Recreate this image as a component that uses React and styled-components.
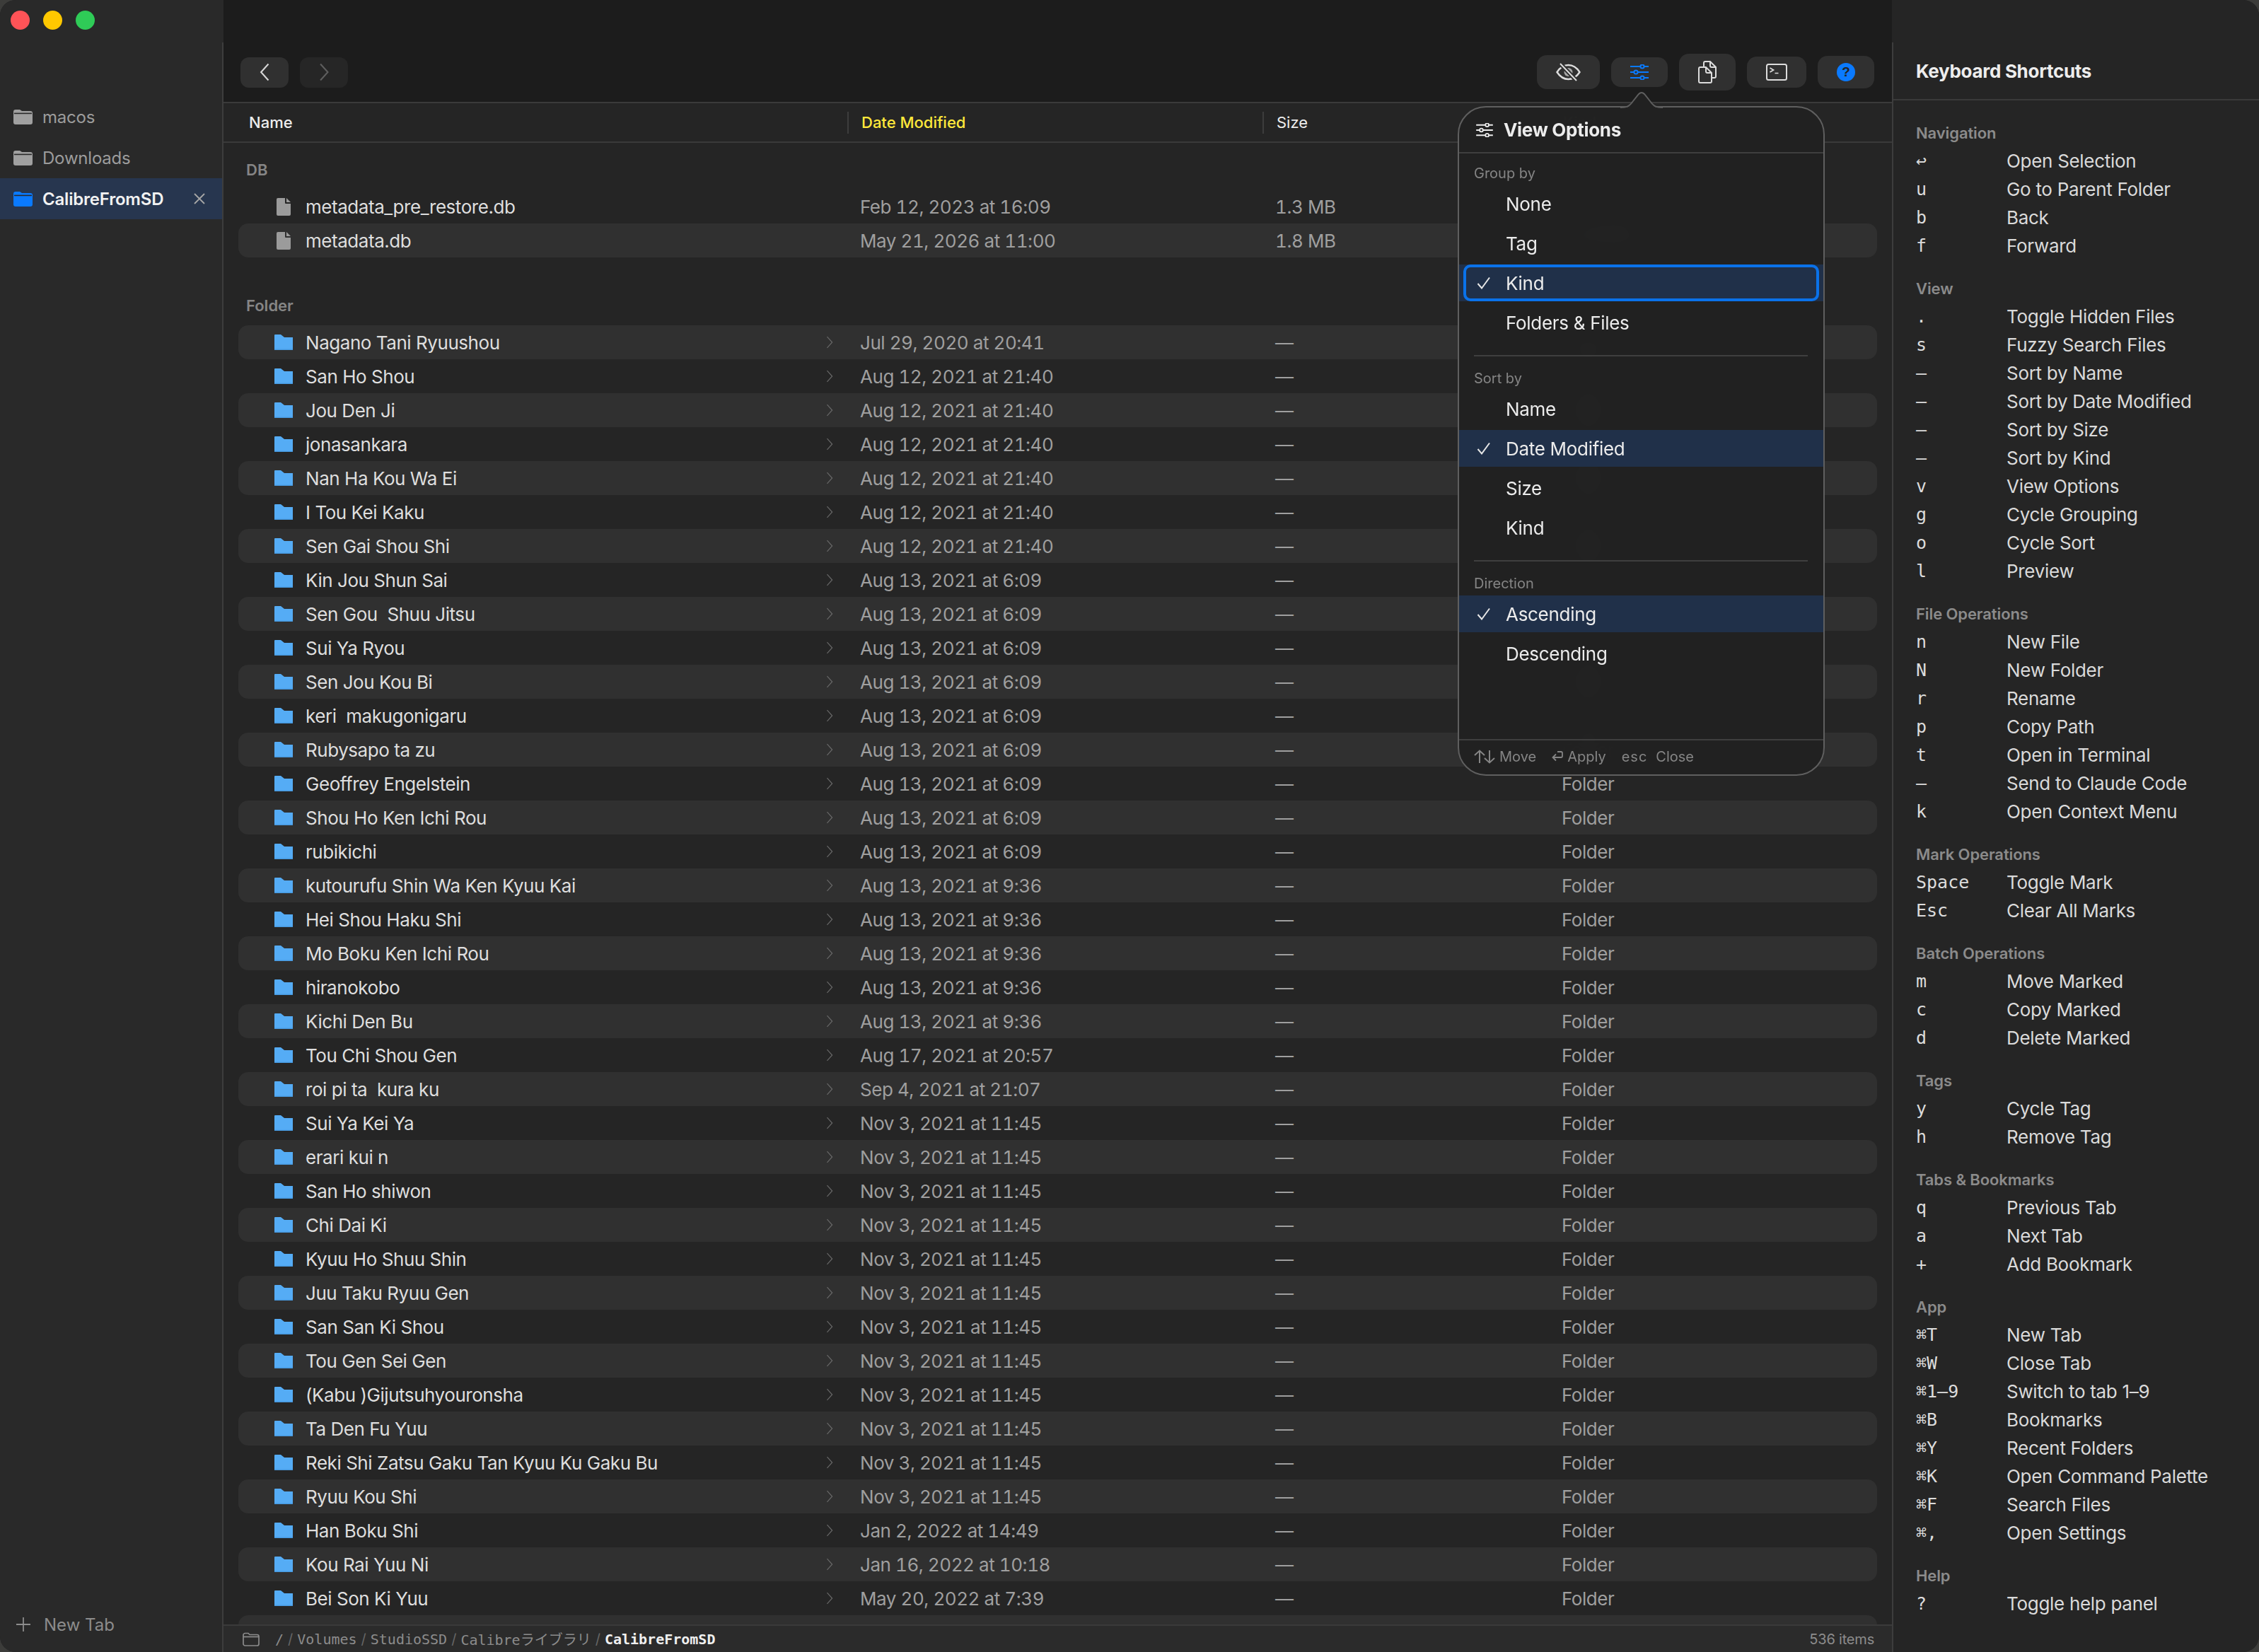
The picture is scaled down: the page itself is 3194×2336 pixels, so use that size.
import React from 'react'
import styled, { createGlobalStyle } from 'styled-components'

const sans = '"Inter", "Noto Sans", sans-serif'
const mono = '"DejaVu Sans Mono", "Noto Sans CJK JP", monospace'

const GlobalStyle = createGlobalStyle`
  html, body {
    margin: 0;
    padding: 0;
    background: #3c3c3a;
  }
  * {
    box-sizing: border-box;
  }
`

const Window = styled.div`
  position: relative;
  display: flex;
  width: 3194px;
  height: 2336px;
  border-radius: 22px;
  overflow: hidden;
  background: #252525;
  font-family: ${sans};
  font-size: 26px;
  color: #dedede;
`

/* Sidebar */
const Sidebar = styled.aside`
  position: relative;
  display: flex;
  flex-direction: column;
  flex: none;
  width: 316px;
  background: #292929;

  &::after {
    content: '';
    position: absolute;
    top: 60px;
    bottom: 0;
    right: 0;
    width: 2px;
    background: #3d3d3d;
  }
`

const Lights = styled.div`
  display: flex;
  align-items: center;
  gap: 19px;
  height: 56px;
  padding-left: 15px;
`

const Light = styled.span`
  width: 27px;
  height: 27px;
  border-radius: 50%;
  background: ${({ $color }) => $color};
`

const TabList = styled.div`
  margin-top: 80px;
`

const Tab = styled.div`
  display: flex;
  align-items: center;
  gap: 14px;
  height: 58px;
  padding: 0 26px 0 19px;
  font-size: 24px;
  font-weight: ${({ $active }) => ($active ? 600 : 400)};
  letter-spacing: -0.2px;
  color: ${({ $active }) => ($active ? '#f2f2f2' : '#9c9c9c')};
  background: ${({ $active }) => ($active ? '#27364f' : 'transparent')};
`

const TabName = styled.span`
  flex: 1;
`

const NewTab = styled.div`
  display: flex;
  align-items: center;
  gap: 19px;
  margin-top: auto;
  height: 52px;
  margin-bottom: 0;
  padding: 0 0 26px 23px;
  font-size: 24px;
  color: #8c8c8c;
`

/* Main column */
const Main = styled.main`
  display: flex;
  flex-direction: column;
  flex: 1;
  min-width: 0;
`

const Toolbar = styled.div`
  display: flex;
  align-items: center;
  flex: none;
  gap: 16px;
  height: 146px;
  padding: 60px 25px 0 24px;
  background: #1c1c1c;
  border-bottom: 2px solid #3a3a3a;
`

const NavButton = styled.button`
  display: flex;
  align-items: center;
  justify-content: center;
  width: 68px;
  height: 43px;
  padding: 0;
  border: 0;
  border-radius: 12px;
  color: ${({ $disabled }) => ($disabled ? '#5e5e5e' : '#d6d6d6')};
  background: ${({ $disabled }) => ($disabled ? '#262626' : '#303030')};
`

const ToolSpacer = styled.div`
  flex: 1;
`

const ToolButton = styled.button`
  display: flex;
  align-items: center;
  justify-content: center;
  padding: 10px 27px;
  border: 0;
  border-radius: 14px;
  color: ${({ $active }) => ($active ? '#0a7aff' : '#dcdcdc')};
  background: #303030;
`

const HelpDot = styled.span`
  display: flex;
  align-items: center;
  justify-content: center;
  width: 26px;
  height: 26px;
  border-radius: 50%;
  font-size: 19px;
  font-weight: 800;
  color: #232323;
  background: #0a7aff;
`

const TableHeader = styled.div`
  display: grid;
  grid-template-columns: 882px 587px 405px 1fr;
  align-items: center;
  flex: none;
  height: 56px;
  border-bottom: 2px solid #3a3a3a;
`

const HeaderCell = styled.div`
  display: flex;
  align-items: center;
  height: 31px;
  padding-left: ${({ $first }) => ($first ? '36px' : '18px')};
  border-left: ${({ $first }) => ($first ? '0' : '2px solid #3d3d3d')};
  font-size: 22px;
  font-weight: ${({ $sorted, $first }) => ($sorted || $first ? 500 : 400)};
  color: ${({ $sorted }) => ($sorted ? '#ffe93b' : '#ededed')};
`

const FileList = styled.div`
  flex: 1;
  min-height: 0;
  overflow: hidden;
  padding: 24px 21px 0;
`

const GroupLabel = styled.div`
  height: 28px;
  margin: ${({ $first }) => ($first ? '0' : '54px')} 0 14px;
  padding-left: 11px;
  font-size: 22px;
  line-height: 28px;
  font-weight: 600;
  color: #858585;
`

const Row = styled.div`
  display: grid;
  grid-template-columns: 861px 587px 405px 1fr;
  align-items: center;
  height: 48px;
  border-radius: 14px;
  background: ${({ $striped }) => ($striped ? '#303030' : 'transparent')};
`

const NameCell = styled.div`
  display: flex;
  align-items: center;
  gap: 18px;
  padding: 0 20px 0 51px;
  white-space: pre;
`

const IconSlot = styled.span`
  display: flex;
  justify-content: center;
  width: 26px;
`

const FileName = styled.span`
  flex: 1;
  letter-spacing: -0.45px;
`

const Cell = styled.div`
  padding-left: 18px;
  font-size: 26px;
  letter-spacing: -0.45px;
  font-variant-numeric: tabular-nums;
  color: #9f9f9f;
`

const StatusBar = styled.div`
  display: flex;
  align-items: center;
  flex: none;
  gap: 6px;
  height: 39px;
  padding: 0 25px 0 27px;
  border-top: 2px solid #3a3a3a;
  background: #2b2b2b;
  font-family: ${mono};
  font-size: 20px;
  color: #8c8c8c;
`

const StatusIcon = styled.span`
  display: flex;
  margin-right: 16px;
`

const PathSep = styled.span`
  font-family: ${sans};
  color: #666;
`

const PathCurrent = styled.span`
  font-weight: 700;
  color: #efefef;
`

const ItemCount = styled.span`
  margin-left: auto;
  font-family: ${sans};
  letter-spacing: -0.2px;
`

/* Help panel */
const HelpPanel = styled.aside`
  position: relative;
  flex: none;
  width: 519px;
  background: #252525;

  &::before {
    content: '';
    position: absolute;
    top: 60px;
    bottom: 0;
    left: 0;
    width: 2px;
    background: #3d3d3d;
  }
`

const HelpTitle = styled.h2`
  display: flex;
  align-items: center;
  height: 142px;
  margin: 0 0 32px;
  padding: 60px 0 0 34px;
  border-bottom: 2px solid #3a3a3a;
  font-size: 26px;
  font-weight: 700;
  letter-spacing: -0.3px;
  color: #ededed;
`

const HelpGroup = styled.section`
  margin: 0 0 27px 34px;
`

const HelpGroupLabel = styled.div`
  height: 28px;
  margin-bottom: 5px;
  font-size: 22px;
  line-height: 28px;
  font-weight: 600;
  letter-spacing: -0.1px;
  color: #8b8b8b;
`

const Shortcut = styled.div`
  display: grid;
  grid-template-columns: 128px 1fr;
  align-items: center;
  height: 40px;
`

const Key = styled.span`
  font-family: ${mono};
  font-size: 25px;
  color: #dcdcdc;
`

const ShortcutText = styled.span`
  font-size: 26px;
  letter-spacing: -0.3px;
  color: #dadada;
`

/* View options popover */
const Popover = styled.div`
  position: absolute;
  top: 150px;
  left: 2061px;
  display: flex;
  flex-direction: column;
  width: 519px;
  height: 947px;
  border: 2px solid #5f5f5f;
  border-radius: 40px;
  background: rgba(33, 33, 33, 0.97);
  backdrop-filter: blur(24px);
`

const PopoverArrow = styled.svg`
  position: absolute;
  top: -23px;
  left: 228px;
`

const PopoverHeader = styled.div`
  display: flex;
  align-items: center;
  gap: 15px;
  flex: none;
  height: 65px;
  padding-left: 24px;
  border-bottom: 2px solid #3f3f3f;
  font-size: 26px;
  font-weight: 700;
  letter-spacing: -0.3px;
  color: #ececec;
  color: #ececec;
`

const OptionGroup = styled.div`
  padding-top: 16px;

  & + & {
    margin-top: 20px;
    padding-top: 21px;
    position: relative;
  }

  & + &::before {
    content: '';
    position: absolute;
    top: 0;
    left: 21px;
    right: 22px;
    height: 2px;
    background: #3f3f3f;
  }
`

const OptionLabel = styled.div`
  height: 24px;
  margin-bottom: 5px;
  padding-left: 21px;
  font-size: 20px;
  line-height: 24px;
  color: #858585;
`

const OptionList = styled.div`
  display: flex;
  flex-direction: column;
  gap: 4px;
`

const Option = styled.div`
  position: relative;
  display: flex;
  align-items: center;
  height: 52px;
  padding-left: 25px;
  letter-spacing: -0.3px;
  color: #ececec;
  background: ${({ $selected }) => ($selected ? '#203049' : 'transparent')};

  ${({ $focused }) => $focused && `
    &::after {
      content: '';
      position: absolute;
      inset: 0 6px;
      border: 4px solid #0a72ea;
      border-radius: 10px;
    }
  `}
`

const CheckSlot = styled.span`
  display: flex;
  width: 41px;
`

const PopoverFooter = styled.div`
  display: flex;
  align-items: center;
  flex: none;
  margin-top: auto;
  height: 50px;
  padding: 0 0 2px 21px;
  border-top: 2px solid #3f3f3f;
  font-size: 20px;
  color: #858585;
`

const Hint = styled.span`
  display: flex;
  align-items: center;
  gap: 6px;
  margin-right: 22px;
`

const HintKey = styled.span`
  letter-spacing: 1px;
  margin-right: 6px;
`

/* Drawn icons */
const FolderGlyph = () => (
  <svg width="26" height="22" viewBox="0 0 26 22">
    <path d="M0 1a1 1 0 0 1 1-1h8l5 4h12v18H0z" fill="#55acf5" />
    <rect y="20.6" width="26" height="1.4" fill="#479ae0" />
  </svg>
)

const DocGlyph = () => (
  <svg width="20" height="25" viewBox="0 0 20 25" fill="#9b9b9b">
    <path d="M2 0h10v7a1 1 0 0 0 1 1h7v15a2 2 0 0 1-2 2H2a2 2 0 0 1-2-2V2a2 2 0 0 1 2-2z" />
    <path d="M14 0l6 6h-6z" />
  </svg>
)

const TabFolder = ({ color }) => (
  <svg width="27" height="21" viewBox="0 0 27 21">
    <path d="M0 3a3 3 0 0 1 3-3h6l3 2h12a3 3 0 0 1 3 3v13a3 3 0 0 1-3 3H3a3 3 0 0 1-3-3z" fill={color} />
    <rect x="1" y="4.6" width="25" height="1.6" fill="#2a2a2a" />
  </svg>
)

const Chevron = ({ left, size = 26, weight = 2, color = 'currentColor' }) => (
  <svg width={size * 0.56} height={size} viewBox="0 0 14 25" fill="none" stroke={color} strokeWidth={weight}>
    <path d={left ? 'M12 1.5 2 12.5l10 11' : 'M2 1.5l10 11-10 11'} />
  </svg>
)

const CheckGlyph = () => (
  <svg width="20" height="18" viewBox="0 0 20 18" fill="none" stroke="#e6e6e6" strokeWidth="2">
    <path d="M1.5 10l5.5 6.5L18 1.5" />
  </svg>
)

const SlidersGlyph = ({ width = 26, height = 22, bg = '#303030' }) => (
  <svg width={width} height={height} viewBox="0 0 26 22" fill={bg} stroke="currentColor" strokeWidth="2">
    <path d="M0 3h26M0 11h26M0 19h26" />
    <circle cx="17" cy="3" r="2.6" />
    <circle cx="8" cy="11" r="2.6" />
    <circle cx="17" cy="19" r="2.6" />
  </svg>
)

const EyeOffGlyph = () => (
  <svg width="35" height="28" viewBox="0 0 35 28" fill="none" stroke="currentColor" strokeWidth="2.4">
    <path d="M1.5 14C6 7 11.5 4 17.5 4s11.500 3 16 10c-4.500 7-10 10-16 10S6 21 1.500 14z" />
    <circle cx="17.500" cy="14" r="6" fill="#a8a8a8" stroke="none" />
    <path d="M6 2l23 24" stroke="#303030" strokeWidth="6" />
    <path d="M6 2l23 24" strokeWidth="2" />
  </svg>
)

const CopyGlyph = () => (
  <svg width="26" height="32" viewBox="0 0 26 32" fill="none" stroke="currentColor" strokeWidth="2">
    <path d="M8 8V3a2 2 0 0 1 2-2h7l8 8v13a2 2 0 0 1-2 2h-4" />
    <path d="M17 1v6a2 2 0 0 0 2 2h6" />
    <path d="M3 9h8l8 8v12a2 2 0 0 1-2 2H3a2 2 0 0 1-2-2V11a2 2 0 0 1 2-2z" />
    <path d="M11 9v6a2 2 0 0 0 2 2h6" />
  </svg>
)

const TerminalGlyph = () => (
  <svg width="30" height="24" viewBox="0 0 30 24" fill="none" stroke="currentColor" strokeWidth="2">
    <rect x="1" y="1" width="28" height="22" rx="2.5" />
    <path d="M5.500 6l5 3-5 3M12.500 13.500h5" strokeWidth="1.700" />
  </svg>
)

const PathFolder = () => (
  <svg width="24" height="20" viewBox="0 0 24 20" fill="none" stroke="#8c8c8c" strokeWidth="1.700">
    <path d="M1 4a2.500 2.500 0 0 1 2.500-2.500h4.500l2 2h10.500a2.500 2.500 0 0 1 2.500 2.500v10.500a2.500 2.500 0 0 1-2.500 2.500h-17a2.500 2.500 0 0 1-2.500-2.500z" />
    <path d="M1 6.500h22" />
  </svg>
)

const PlusGlyph = () => (
  <svg width="20" height="20" viewBox="0 0 20 20" stroke="#8c8c8c" strokeWidth="1.800">
    <path d="M10 0v20M0 10h20" />
  </svg>
)

const CloseGlyph = () => (
  <svg width="16" height="16" viewBox="0 0 16 16" stroke="#a6a6a6" strokeWidth="1.800">
    <path d="M1 1l14 14M15 1L1 15" />
  </svg>
)

const MoveGlyph = () => (
  <svg width="30" height="20" viewBox="0 0 30 20" fill="none" stroke="#858585" strokeWidth="2">
    <path d="M8 19V2M1 8l7-6.500L15 8M22 1v17M15 12l7 6.500 7-6.500" />
  </svg>
)

const ReturnGlyph = () => (
  <svg width="16" height="18" viewBox="0 0 16 18" fill="none" stroke="#858585" strokeWidth="1.800">
    <path d="M8 2h5a2 2 0 0 1 2 2v4a2 2 0 0 1-2 2H2M6 5.500L1.500 10 6 14.500" />
  </svg>
)

const folders = [
  ['Nagano Tani Ryuushou', 'Jul 29, 2020 at 20:41'],
  ['San Ho Shou', 'Aug 12, 2021 at 21:40'],
  ['Jou Den Ji', 'Aug 12, 2021 at 21:40'],
  ['jonasankara', 'Aug 12, 2021 at 21:40'],
  ['Nan Ha Kou Wa Ei', 'Aug 12, 2021 at 21:40'],
  ['I Tou Kei Kaku', 'Aug 12, 2021 at 21:40'],
  ['Sen Gai Shou Shi', 'Aug 12, 2021 at 21:40'],
  ['Kin Jou Shun Sai', 'Aug 13, 2021 at 6:09'],
  ['Sen Gou  Shuu Jitsu', 'Aug 13, 2021 at 6:09'],
  ['Sui Ya Ryou', 'Aug 13, 2021 at 6:09'],
  ['Sen Jou Kou Bi', 'Aug 13, 2021 at 6:09'],
  ['keri  makugonigaru', 'Aug 13, 2021 at 6:09'],
  ['Rubysapo ta zu', 'Aug 13, 2021 at 6:09'],
  ['Geoffrey Engelstein', 'Aug 13, 2021 at 6:09'],
  ['Shou Ho Ken Ichi Rou', 'Aug 13, 2021 at 6:09'],
  ['rubikichi', 'Aug 13, 2021 at 6:09'],
  ['kutourufu Shin Wa Ken Kyuu Kai', 'Aug 13, 2021 at 9:36'],
  ['Hei Shou Haku Shi', 'Aug 13, 2021 at 9:36'],
  ['Mo Boku Ken Ichi Rou', 'Aug 13, 2021 at 9:36'],
  ['hiranokobo', 'Aug 13, 2021 at 9:36'],
  ['Kichi Den Bu', 'Aug 13, 2021 at 9:36'],
  ['Tou Chi Shou Gen', 'Aug 17, 2021 at 20:57'],
  ['roi pi ta  kura ku', 'Sep 4, 2021 at 21:07'],
  ['Sui Ya Kei Ya', 'Nov 3, 2021 at 11:45'],
  ['erari kui n', 'Nov 3, 2021 at 11:45'],
  ['San Ho shiwon', 'Nov 3, 2021 at 11:45'],
  ['Chi Dai Ki', 'Nov 3, 2021 at 11:45'],
  ['Kyuu Ho Shuu Shin', 'Nov 3, 2021 at 11:45'],
  ['Juu Taku Ryuu Gen', 'Nov 3, 2021 at 11:45'],
  ['San San Ki Shou', 'Nov 3, 2021 at 11:45'],
  ['Tou Gen Sei Gen', 'Nov 3, 2021 at 11:45'],
  ['(Kabu )Gijutsuhyouronsha', 'Nov 3, 2021 at 11:45'],
  ['Ta Den Fu Yuu', 'Nov 3, 2021 at 11:45'],
  ['Reki Shi Zatsu Gaku Tan Kyuu Ku Gaku Bu', 'Nov 3, 2021 at 11:45'],
  ['Ryuu Kou Shi', 'Nov 3, 2021 at 11:45'],
  ['Han Boku Shi', 'Jan 2, 2022 at 14:49'],
  ['Kou Rai Yuu Ni', 'Jan 16, 2022 at 10:18'],
  ['Bei Son Ki Yuu', 'May 20, 2022 at 7:39'],
]

const shortcuts = [
  ['Navigation', [['↩', 'Open Selection'], ['u', 'Go to Parent Folder'], ['b', 'Back'], ['f', 'Forward']]],
  ['View', [
    ['.', 'Toggle Hidden Files'], ['s', 'Fuzzy Search Files'], ['—', 'Sort by Name'],
    ['—', 'Sort by Date Modified'], ['—', 'Sort by Size'], ['—', 'Sort by Kind'],
    ['v', 'View Options'], ['g', 'Cycle Grouping'], ['o', 'Cycle Sort'], ['l', 'Preview'],
  ]],
  ['File Operations', [
    ['n', 'New File'], ['N', 'New Folder'], ['r', 'Rename'], ['p', 'Copy Path'],
    ['t', 'Open in Terminal'], ['—', 'Send to Claude Code'], ['k', 'Open Context Menu'],
  ]],
  ['Mark Operations', [['Space', 'Toggle Mark'], ['Esc', 'Clear All Marks']]],
  ['Batch Operations', [['m', 'Move Marked'], ['c', 'Copy Marked'], ['d', 'Delete Marked']]],
  ['Tags', [['y', 'Cycle Tag'], ['h', 'Remove Tag']]],
  ['Tabs & Bookmarks', [['q', 'Previous Tab'], ['a', 'Next Tab'], ['+', 'Add Bookmark']]],
  ['App', [
    ['⌘T', 'New Tab'], ['⌘W', 'Close Tab'], ['⌘1–9', 'Switch to tab 1–9'], ['⌘B', 'Bookmarks'],
    ['⌘Y', 'Recent Folders'], ['⌘K', 'Open Command Palette'], ['⌘F', 'Search Files'], ['⌘,', 'Open Settings'],
  ]],
  ['Help', [['?', 'Toggle help panel']]],
]

const viewOptions = [
  ['Group by', ['None', 'Tag', 'Kind', 'Folders & Files'], 'Kind'],
  ['Sort by', ['Name', 'Date Modified', 'Size', 'Kind'], 'Date Modified'],
  ['Direction', ['Ascending', 'Descending'], 'Ascending'],
]

const FileRow = ({ icon, name, date, size, kind, striped, chevron }) => (
  <Row $striped={striped}>
    <NameCell>
      <IconSlot>{icon}</IconSlot>
      <FileName>{name}</FileName>
      {chevron && <Chevron size={18} weight={1.6} color="#6a6a6a" />}
    </NameCell>
    <Cell>{date}</Cell>
    <Cell>{size}</Cell>
    <Cell>{kind}</Cell>
  </Row>
)

const App = () => (
  <Window>
    <GlobalStyle />

    <Sidebar>
      <Lights>
        <Light $color="#ff5357" />
        <Light $color="#ffc800" />
        <Light $color="#2fcb57" />
      </Lights>
      <TabList>
        <Tab><TabFolder color="#a0a0a0" /><TabName>macos</TabName></Tab>
        <Tab><TabFolder color="#a0a0a0" /><TabName>Downloads</TabName></Tab>
        <Tab $active><TabFolder color="#0a7aff" /><TabName>CalibreFromSD</TabName><CloseGlyph /></Tab>
      </TabList>
      <NewTab><PlusGlyph />New Tab</NewTab>
    </Sidebar>

    <Main>
      <Toolbar>
        <NavButton><Chevron left /></NavButton>
        <NavButton $disabled><Chevron /></NavButton>
        <ToolSpacer />
        <ToolButton><EyeOffGlyph /></ToolButton>
        <ToolButton $active><SlidersGlyph /></ToolButton>
        <ToolButton><CopyGlyph /></ToolButton>
        <ToolButton><TerminalGlyph /></ToolButton>
        <ToolButton><HelpDot>?</HelpDot></ToolButton>
      </Toolbar>

      <TableHeader>
        <HeaderCell $first>Name</HeaderCell>
        <HeaderCell $sorted>Date Modified</HeaderCell>
        <HeaderCell>Size</HeaderCell>
        <HeaderCell>Kind</HeaderCell>
      </TableHeader>

      <FileList>
        <GroupLabel $first>DB</GroupLabel>
        <FileRow icon={<DocGlyph />} name="metadata_pre_restore.db" date="Feb 12, 2023 at 16:09" size="1.3 MB" kind="Document" />
        <FileRow icon={<DocGlyph />} name="metadata.db" date="May 21, 2026 at 11:00" size="1.8 MB" kind="Document" striped />

        <GroupLabel>Folder</GroupLabel>
        {folders.map(([name, date], i) => (
          <FileRow
            key={name}
            icon={<FolderGlyph />}
            name={name}
            date={date}
            size="—"
            kind="Folder"
            striped={i % 2 === 0}
            chevron
          />
        ))}
        <Row $striped />
      </FileList>

      <StatusBar>
        <StatusIcon><PathFolder /></StatusIcon>
        <span>/</span>
        <PathSep>/</PathSep>
        <span>Volumes</span>
        <PathSep>/</PathSep>
        <span>StudioSSD</span>
        <PathSep>/</PathSep>
        <span>Calibreライブラリ</span>
        <PathSep>/</PathSep>
        <PathCurrent>CalibreFromSD</PathCurrent>
        <ItemCount>536 items</ItemCount>
      </StatusBar>
    </Main>

    <HelpPanel>
      <HelpTitle>Keyboard Shortcuts</HelpTitle>
      {shortcuts.map(([title, items]) => (
        <HelpGroup key={title}>
          <HelpGroupLabel>{title}</HelpGroupLabel>
          {items.map(([key, text]) => (
            <Shortcut key={text}>
              <Key>{key}</Key>
              <ShortcutText>{text}</ShortcutText>
            </Shortcut>
          ))}
        </HelpGroup>
      ))}
    </HelpPanel>

    <Popover>
      <PopoverArrow width="60" height="25" viewBox="0 0 60 25">
        <path d="M0 24c10 0 13-2 18-9l8-11q4-4 8 0l8 11c5 7 8 9 18 9z" fill="#212121" />
        <path d="M0 23c10 0 13-2 18-9l8-10q4-4 8 0l8 10c5 7 8 9 18 9" fill="none" stroke="#5f5f5f" strokeWidth="2" />
      </PopoverArrow>
      <PopoverHeader>
        <SlidersGlyph width={24} height={20} bg="#212121" />
        View Options
      </PopoverHeader>
      {viewOptions.map(([title, items, selected]) => (
        <OptionGroup key={title}>
          <OptionLabel>{title}</OptionLabel>
          <OptionList>
            {items.map((item) => (
              <Option key={item} $selected={item === selected} $focused={title === 'Group by' && item === selected}>
                <CheckSlot>{item === selected && <CheckGlyph />}</CheckSlot>
                {item}
              </Option>
            ))}
          </OptionList>
        </OptionGroup>
      ))}
      <PopoverFooter>
        <Hint><MoveGlyph />Move</Hint>
        <Hint><ReturnGlyph />Apply</Hint>
        <Hint><HintKey>esc</HintKey>Close</Hint>
      </PopoverFooter>
    </Popover>
  </Window>
)

export default App
